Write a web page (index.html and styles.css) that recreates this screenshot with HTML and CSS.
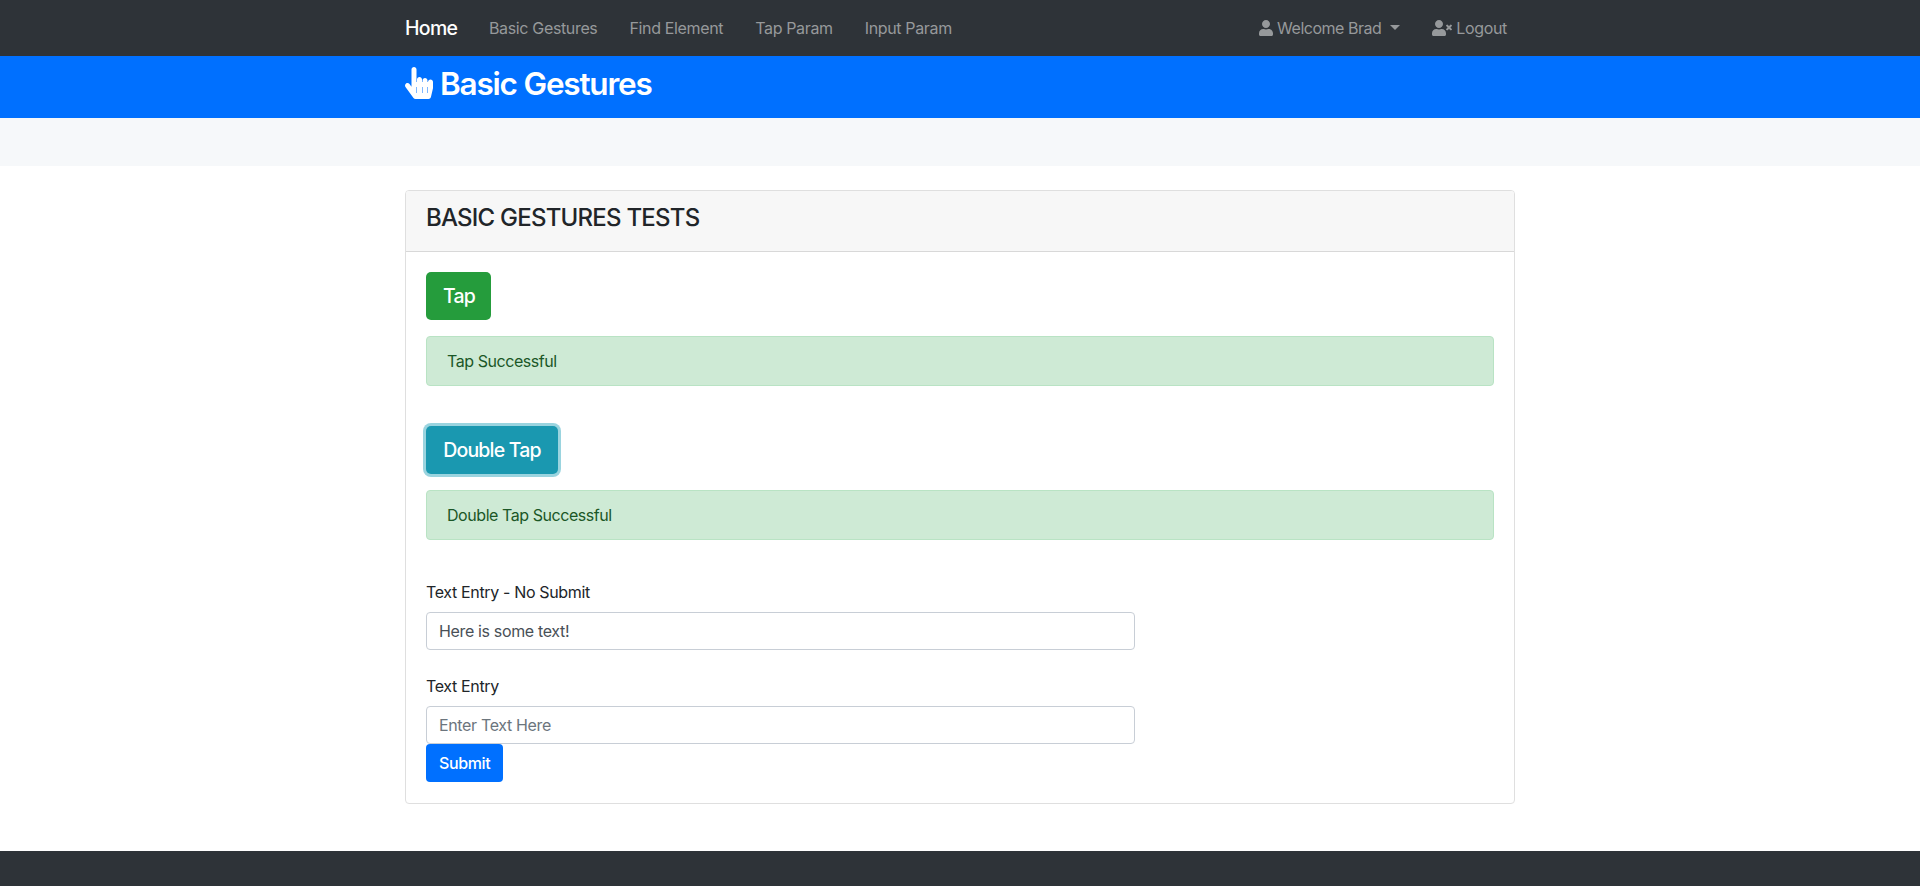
FILE: index.html
```html
<!DOCTYPE html>
<html lang="en">
<head>
<meta charset="utf-8">
<title>Basic Gestures</title>
<link rel="stylesheet" href="styles.css">
</head>
<body>
<nav class="navbar">
  <div class="container navbar-row">
    <a class="brand">Home</a>
    <ul class="nav-list">
      <li><a class="nav-link">Basic Gestures</a></li>
      <li><a class="nav-link">Find Element</a></li>
      <li><a class="nav-link">Tap Param</a></li>
      <li><a class="nav-link">Input Param</a></li>
    </ul>
    <ul class="nav-list nav-right">
      <li><a class="nav-link"><svg class="icon-user" viewBox="0 0 448 512"><path d="M224 256c70.7 0 128-57.3 128-128S294.7 0 224 0 96 57.3 96 128s57.3 128 128 128zm89.6 32h-16.7c-22.2 10.2-46.9 16-72.9 16s-50.6-5.8-72.9-16h-16.7C60.2 288 0 348.2 0 422.4V464c0 26.500 21.500 48 48 48h352c26.500 0 48-21.500 48-48v-41.600c0-74.200-60.200-134.400-134.400-134.400z"/></svg><span class="user-name">Welcome Brad</span><i class="caret"></i></a></li>
      <li><a class="nav-link"><svg class="icon-times" viewBox="0 0 640 512"><path d="M589.600 240l45.600-45.600c6.300-6.300 6.300-16.500 0-22.800l-22.800-22.800c-6.300-6.300-16.500-6.300-22.800 0L544 194.400l-45.600-45.600c-6.300-6.300-16.500-6.300-22.800 0l-22.800 22.800c-6.300 6.300-6.300 16.500 0 22.800l45.600 45.600-45.600 45.600c-6.300 6.300-6.300 16.500 0 22.800l22.800 22.800c6.300 6.300 16.500 6.300 22.800 0l45.600-45.600 45.600 45.600c6.300 6.300 16.500 6.300 22.800 0l22.800-22.800c6.300-6.300 6.300-16.500 0-22.800zM224 256c70.700 0 128-57.300 128-128S294.700 0 224 0 96 57.300 96 128s57.300 128 128 128zm89.600 32h-16.700c-22.200 10.200-46.900 16-72.900 16s-50.600-5.800-72.900-16h-16.700C60.200 288 0 348.200 0 422.400V464c0 26.500 21.500 48 48 48h352c26.500 0 48-21.500 48-48v-41.600c0-74.200-60.200-134.400-134.400-134.400z"/></svg><span>Logout</span></a></li>
    </ul>
  </div>
</nav>
<header class="page-header">
  <div class="container">
    <h1 class="page-title"><svg class="icon-hand" viewBox="0 0 448 512"><path d="M448 240v96c0 3.084-.356 6.159-1.063 9.162l-32 136C410.686 499.23 394.562 512 376 512H168a40.004 40.004 0 0 1-32.350-16.473l-127.997-176c-12.993-17.866-9.043-42.883 8.822-55.876 17.867-12.994 42.884-9.043 55.877 8.823L104 315.992V40c0-22.091 17.908-40 40-40s40 17.909 40 40v200h8v-40c0-22.091 17.908-40 40-40s40 17.909 40 40v40h8v-24c0-22.091 17.908-40 40-40s40 17.909 40 40v24h8c0-22.091 17.908-40 40-40s40 17.909 40 40zm-256 80h-8v96h8v-96zm88 0h-8v96h8v-96zm88 0h-8v96h8v-96z"/></svg><span>Basic Gestures</span></h1>
  </div>
</header>
<section class="strip"></section>
<main class="container">
  <div class="card">
    <div class="card-header"><h4 class="card-title">BASIC GESTURES TESTS</h4></div>
    <div class="card-body">
      <button class="btn btn-lg btn-success">Tap</button>
      <div class="alert">Tap Successful</div>
      <button class="btn btn-lg btn-info">Double Tap</button>
      <div class="alert">Double Tap Successful</div>
      <form class="form">
        <label class="label" for="plain">Text Entry - No Submit</label>
        <input class="input input-plain" id="plain" type="text" value="Here is some text!">
        <label class="label" for="entry">Text Entry</label>
        <input class="input" id="entry" type="text" placeholder="Enter Text Here">
        <button class="btn btn-primary" type="button">Submit</button>
      </form>
    </div>
  </div>
</main>
<footer class="footer"></footer>
</body>
</html>
```
FILE: styles.css
```css
* { box-sizing: border-box; }
body {
  margin: 0;
  height: 886px;
  overflow: hidden;
  display: flex;
  flex-direction: column;
  font: 400 16px/24px Inter, "Liberation Sans", sans-serif;
  letter-spacing: -0.35px;
  color: #212529;
  background: #fff;
}
.container { width: 1110px; margin: 0 auto; }
.navbar { height: 56px; background: #2e3338; }
.navbar-row { height: 56px; display: flex; align-items: center; }
.brand { width: 52px; margin-right: 24px; font-size: 19.5px; line-height: 30px; font-weight: 500; letter-spacing: -0.7px; color: #fff; white-space: nowrap; }
.nav-list { display: flex; gap: 16px; margin: 0; padding: 0; list-style: none; }
.nav-right { margin-left: auto; }
.nav-link { display: flex; align-items: center; padding: 8px; color: #96999b; white-space: nowrap; }
.icon-user { width: 14px; height: 16px; margin-right: 4px; fill: currentColor; }
.icon-times { width: 20px; height: 16px; margin-right: 4px; fill: currentColor; }
.user-name { letter-spacing: -0.48px; }
.caret { margin-left: 9px; margin-top: -2px; border: 5px solid transparent; border-top-color: currentColor; border-bottom: 0; }
.page-header { height: 62px; padding-top: 8px; background: #0070ff; color: #fff; }
.page-title { display: flex; align-items: flex-start; gap: 7px; margin: 0; font-size: 31.5px; line-height: 38px; font-weight: 600; letter-spacing: -1.2px; }
.page-title span { padding-top: 1px; }
.icon-hand { width: 28px; height: 32px; margin-top: 3px; fill: currentColor; }
.strip { height: 48px; margin-bottom: 24px; background: #f6f8fa; }
.card { height: 614px; border: 1px solid #dfdfdf; border-radius: 4px; }
.card-header { height: 61px; padding: 12px 20px; background: #f7f7f7; border-bottom: 1px solid #d8d8d8; border-radius: 3px 3px 0 0; }
.card-title { margin: 0; font-size: 24px; line-height: 29px; font-weight: 500; letter-spacing: -0.77px; }
.card-body { padding: 20px; }
.btn { display: block; height: 38px; padding: 0 13px; border: 0; border-radius: 4px; font: inherit; font-weight: 500; letter-spacing: -0.38px; color: #fff; white-space: nowrap; }
.btn-lg { height: 48px; padding: 0 17px; border-radius: 5px; font-size: 19.5px; letter-spacing: -0.8px; }
.btn-success { width: 65px; background: #259c3c; }
.btn-info { width: 132px; background: #1a98b0; box-shadow: 0 0 0 3px #9ad4df; }
.btn-primary { width: 77px; background: #0070ff; }
.alert { height: 50px; margin: 16px 0 40px; padding: 12px 20px; border: 1px solid #b9e3c4; border-radius: 4px; background: #ceead5; color: #1b5727; letter-spacing: -0.44px; }
.label { display: block; margin-bottom: 8px; }
.input { display: block; width: 709px; height: 38px; padding: 6px 12px; border: 1px solid #c8ced6; border-radius: 4px; background: #fff; font: inherit; letter-spacing: inherit; color: #495057; }
.input::placeholder { color: #6c757d; opacity: 1; }
.input-plain { margin-bottom: 24px; }
.footer { flex: 1; margin-top: 47px; background: #2e3338; }
```
